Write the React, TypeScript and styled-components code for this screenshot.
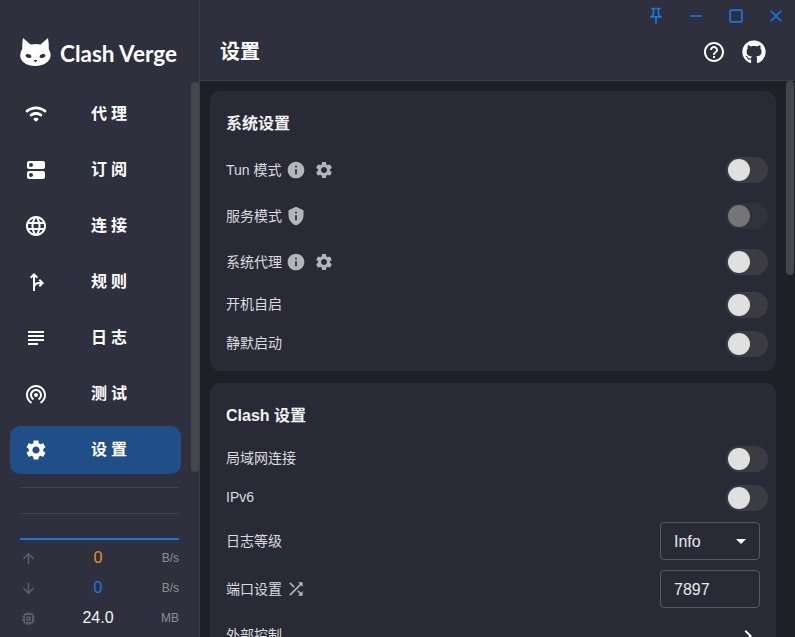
import React from 'react';
import styled, { createGlobalStyle } from 'styled-components';
import {
  MdLanguage, MdForkRight, MdSubject, MdWifiTethering, MdSettings,
  MdArrowUpward, MdArrowDownward, MdMemory, MdInfo, MdPrivacyTip, MdShuffle,
  MdHelpOutline, MdChevronRight, MdArrowDropDown, MdOutlinePushPin, MdClose, MdCropSquare, MdRemove,
} from 'react-icons/md';
import { FaGithub } from 'react-icons/fa';

const GlobalStyle = createGlobalStyle`
  html, body { margin: 0; padding: 0; height: 100%; overflow: hidden; background: #1e1f27; }
  #root { height: 100%; }
  * { box-sizing: border-box; }
  body { font-family: "Liberation Sans", "Noto Sans CJK SC", sans-serif; }
`;

const Layout = styled.div`
  display: flex;
  width: 100vw;
  height: 100vh;
  overflow: hidden;
`;

const Sidebar = styled.aside`
  position: relative;
  flex: 0 0 200px;
  display: flex;
  flex-direction: column;
  background: #2e303d;
  border-right: 1px solid #3c3e4a;
  overflow: hidden;
`;

const Logo = styled.div`
  display: flex;
  align-items: center;
  gap: 9px;
  height: 90px;
  padding: 14px 0 0 20px;
  color: #fff;
  font-family: "Lato", sans-serif;
  font-weight: 700;
  font-size: 22.5px;
`;

const LogoText = styled.span`
  margin-top: 2px;
`;

const NavList = styled.nav`
  display: flex;
  flex-direction: column;
  gap: 8px;
  padding: 0 18px 0 10px;
`;

const NavItem = styled.div<{ $active?: boolean }>`
  display: flex;
  align-items: center;
  height: 48px;
  padding: 0 7px 0 14px;
  border-radius: 10px;
  color: #fff;
  background: ${(p) => (p.$active ? '#1f4f86' : 'transparent')};
  svg { flex: 0 0 24px; font-size: 24px; }
`;

const NavLabel = styled.span`
  flex: 1;
  margin-bottom: 4px;
  text-align: center;
  font-size: 16px;
  font-weight: 700;
  letter-spacing: 4px;
`;

const Traffic = styled.div`
  display: flex;
  flex-direction: column;
  margin: 13px 20px 0;
`;

const GridLine = styled.div`
  height: 1px;
  margin-bottom: 25px;
  background: #41434e;
`;

const TrafficLine = styled.div`
  height: 2px;
  margin: -1px 0 3px;
  background: #1976e6;
`;

const TrafficRow = styled.div`
  display: grid;
  grid-template-columns: 16px 1fr 32px;
  align-items: center;
  height: 30px;
  svg { font-size: 17px; color: #5f616c; }
`;

const TrafficValue = styled.span<{ $color: string }>`
  padding-left: 13px;
  text-align: center;
  font-size: 16px;
  color: ${(p) => p.$color};
`;

const TrafficUnit = styled.span`
  text-align: right;
  font-size: 12px;
  color: #8e8f96;
`;

const Thumb = styled.div<{ $top: number; $height: number; $right: number }>`
  position: absolute;
  top: ${(p) => p.$top}px;
  right: ${(p) => p.$right}px;
  width: 8px;
  height: ${(p) => p.$height}px;
  border-radius: 4px;
  background: #45464c;
`;

const Main = styled.main`
  position: relative;
  flex: 1;
  min-width: 0;
  display: flex;
  flex-direction: column;
`;

const Header = styled.header`
  flex: 0 0 81px;
  display: flex;
  flex-direction: column;
  background: #2e303d;
  border-bottom: 1px solid #3c3e4a;
`;

const WindowBar = styled.div`
  display: flex;
  justify-content: flex-end;
  height: 32px;
  margin-right: -1px;
  color: #1976e6;
`;

const WindowButton = styled.div`
  display: flex;
  align-items: center;
  justify-content: center;
  width: 40px;
  height: 32px;
  svg { font-size: 20px; }
`;

const TitleBar = styled.div`
  display: flex;
  align-items: center;
  justify-content: space-between;
  height: 40px;
  padding: 0 29px 0 20px;
  color: #fff;
`;

const PageTitle = styled.h1`
  margin: 0 0 3px;
  font-size: 20px;
  font-weight: 700;
`;

const TitleIcons = styled.div`
  display: flex;
  align-items: center;
  gap: 16px;
`;

const Content = styled.div`
  flex: 1;
  display: flex;
  flex-direction: column;
  gap: 12px;
  padding: 10px 19px 0 10px;
  overflow: hidden;
  background: #1e1f27;
`;

const Card = styled.section`
  flex: 0 0 auto;
  padding: 0 8px 8px 16px;
  border-radius: 10px;
  background: #282a36;
`;

const CardTitle = styled.h2`
  display: flex;
  align-items: center;
  margin: 0;
  height: 56px;
  padding-top: 6px;
  font-size: 16px;
  font-weight: 700;
  color: #f2f2f3;
`;

const Row = styled.div<{ $height: number }>`
  display: flex;
  align-items: center;
  justify-content: space-between;
  height: ${(p) => p.$height}px;
`;

const RowLabel = styled.div`
  display: flex;
  align-items: center;
  font-size: 14px;
  color: #dcdcdf;
`;

const RowText = styled.span<{ $lift?: number }>`
  margin-bottom: ${(p) => p.$lift ?? 2}px;
`;

const HintIcon = styled.span<{ $gap?: number }>`
  display: inline-flex;
  margin-left: ${(p) => p.$gap ?? 4}px;
  color: #b4b4b9;
  svg { display: block; font-size: 20px; }
`;

const SwitchTrack = styled.div<{ $disabled?: boolean }>`
  position: relative;
  width: 42px;
  height: 26px;
  border-radius: 13px;
  background: ${(p) => (p.$disabled ? '#31323c' : '#3c3b41')};
`;

const SwitchKnob = styled.div<{ $disabled?: boolean }>`
  position: absolute;
  top: 2px;
  left: 2px;
  width: 22px;
  height: 22px;
  border-radius: 50%;
  background: ${(p) => (p.$disabled ? '#757575' : '#e0e0e0')};
`;

const Field = styled.div`
  display: flex;
  align-items: center;
  justify-content: space-between;
  width: 100px;
  height: 38px;
  margin-right: 8px;
  padding: 0 6px 0 13px;
  border: 1px solid #565964;
  border-radius: 4px;
  font-size: 16px;
  color: #e8e8ea;
  svg { font-size: 24px; color: #fff; }
`;

const FieldText = styled.span`
  margin-top: 2px;
`;

const Chevron = styled.span`
  display: inline-flex;
  margin-right: 8px;
  color: #fff;
  svg { font-size: 24px; }
`;

const WifiIcon = () => (
  <svg viewBox="0 0 24 24" width="24" height="24" fill="currentColor">
    <path d="M2.06 10.06c.51.51 1.32.56 1.87.1 4.67-3.84 11.45-3.84 16.13-.01.56.46 1.38.42 1.89-.09.59-.59.55-1.57-.1-2.1-5.71-4.67-13.97-4.67-19.69 0-.65.52-.7 1.5-.1 2.1m7.76 7.76 1.47 1.47c.39.39 1.02.39 1.41 0l1.47-1.47c.47-.47.37-1.28-.23-1.59-1.22-.63-2.68-.63-3.91 0-.57.31-.68 1.12-.21 1.59m-3.73-3.73c.49.49 1.26.54 1.83.13 2.44-1.73 5.72-1.73 8.16 0 .57.4 1.34.36 1.83-.13l.01-.01c.6-.6.56-1.62-.13-2.11-3.44-2.49-8.13-2.49-11.58 0-.69.5-.73 1.51-.12 2.12" />
  </svg>
);

const DnsIcon = () => (
  <svg viewBox="0 0 24 24" width="24" height="24" fill="currentColor">
    <path d="M19 13H5c-1.1 0-2 .9-2 2v4c0 1.1.9 2 2 2h14c1.1 0 2-.9 2-2v-4c0-1.1-.9-2-2-2M7 19c-1.1 0-2-.9-2-2s.9-2 2-2 2 .9 2 2-.9 2-2 2M19 3H5c-1.1 0-2 .9-2 2v4c0 1.1.9 2 2 2h14c1.1 0 2-.9 2-2V5c0-1.1-.9-2-2-2M7 9c-1.1 0-2-.9-2-2s.9-2 2-2 2 .9 2 2-.9 2-2 2" />
  </svg>
);

const navItems = [
  { label: '代理', icon: <WifiIcon /> },
  { label: '订阅', icon: <DnsIcon /> },
  { label: '连接', icon: <MdLanguage /> },
  { label: '规则', icon: <MdForkRight /> },
  { label: '日志', icon: <MdSubject /> },
  { label: '测试', icon: <MdWifiTethering /> },
  { label: '设置', icon: <MdSettings />, active: true },
];

const CatLogo = () => (
  <svg width="31" height="28" viewBox="0 0 31 28">
    <path
      fill="#fff"
      d="M3 0 L10.5 6.5 Q15.5 5.5 20.5 6.5 L28 0 Q29 6 28.8 11 Q31 15 30.6 18 C30 24 23 28 15.5 28 C7 28 .6 24 .2 18 Q0 14 2.2 11 Q2 5 3 0Z"
    />
    <ellipse cx="8.5" cy="18" rx="3" ry="1.8" fill="#2e303d" transform="rotate(20 8.5 18)" />
    <ellipse cx="22.5" cy="18" rx="3" ry="1.8" fill="#2e303d" transform="rotate(-20 22.5 18)" />
    <path fill="#2e303d" d="M13.5 22 H17.5 L15.5 24.5Z" />
  </svg>
);

const Switch: React.FC<{ disabled?: boolean }> = ({ disabled }) => (
  <SwitchTrack $disabled={disabled}>
    <SwitchKnob $disabled={disabled} />
  </SwitchTrack>
);

const App: React.FC = () => (
  <Layout>
    <GlobalStyle />
    <Sidebar>
      <Logo>
        <CatLogo />
        <LogoText>Clash Verge</LogoText>
      </Logo>
      <NavList>
        {navItems.map((item) => (
          <NavItem key={item.label} $active={item.active}>
            {item.icon}
            <NavLabel>{item.label}</NavLabel>
          </NavItem>
        ))}
      </NavList>
      <Traffic>
        <GridLine />
        <GridLine />
        <TrafficLine />
        <TrafficRow>
          <MdArrowUpward />
          <TrafficValue $color="#e8931f">0</TrafficValue>
          <TrafficUnit>B/s</TrafficUnit>
        </TrafficRow>
        <TrafficRow>
          <MdArrowDownward />
          <TrafficValue $color="#1976e6">0</TrafficValue>
          <TrafficUnit>B/s</TrafficUnit>
        </TrafficRow>
        <TrafficRow>
          <MdMemory />
          <TrafficValue $color="#f2f2f3">24.0</TrafficValue>
          <TrafficUnit>MB</TrafficUnit>
        </TrafficRow>
      </Traffic>
      <Thumb $top={82} $height={390} $right={0} />
    </Sidebar>
    <Main>
      <Header>
        <WindowBar>
          <WindowButton><MdOutlinePushPin /></WindowButton>
          <WindowButton><MdRemove /></WindowButton>
          <WindowButton><MdCropSquare /></WindowButton>
          <WindowButton><MdClose /></WindowButton>
        </WindowBar>
        <TitleBar>
          <PageTitle>设置</PageTitle>
          <TitleIcons>
            <MdHelpOutline size={24} />
            <FaGithub size={24} />
          </TitleIcons>
        </TitleBar>
      </Header>
      <Content>
        <Card>
          <CardTitle>系统设置</CardTitle>
          <Row $height={46}>
            <RowLabel>
              <RowText>Tun 模式</RowText>
              <HintIcon><MdInfo /></HintIcon>
              <HintIcon $gap={8}><MdSettings /></HintIcon>
            </RowLabel>
            <Switch />
          </Row>
          <Row $height={46}>
            <RowLabel>
              <RowText>服务模式</RowText>
              <HintIcon><MdPrivacyTip /></HintIcon>
            </RowLabel>
            <Switch disabled />
          </Row>
          <Row $height={46}>
            <RowLabel>
              <RowText>系统代理</RowText>
              <HintIcon><MdInfo /></HintIcon>
              <HintIcon $gap={8}><MdSettings /></HintIcon>
            </RowLabel>
            <Switch />
          </Row>
          <Row $height={39}>
            <RowLabel><RowText $lift={4}>开机自启</RowText></RowLabel>
            <Switch />
          </Row>
          <Row $height={39}>
            <RowLabel><RowText $lift={4}>静默启动</RowText></RowLabel>
            <Switch />
          </Row>
        </Card>
        <Card>
          <CardTitle>Clash 设置</CardTitle>
          <Row $height={39}>
            <RowLabel><RowText $lift={4}>局域网连接</RowText></RowLabel>
            <Switch />
          </Row>
          <Row $height={39}>
            <RowLabel><RowText>IPv6</RowText></RowLabel>
            <Switch />
          </Row>
          <Row $height={48}>
            <RowLabel><RowText $lift={3}>日志等级</RowText></RowLabel>
            <Field><FieldText>Info</FieldText><MdArrowDropDown /></Field>
          </Row>
          <Row $height={48}>
            <RowLabel>
              <RowText $lift={3}>端口设置</RowText>
              <HintIcon $gap={4}><MdShuffle /></HintIcon>
            </RowLabel>
            <Field><FieldText>7897</FieldText></Field>
          </Row>
          <Row $height={46}>
            <RowLabel><RowText $lift={4}>外部控制</RowText></RowLabel>
            <Chevron><MdChevronRight /></Chevron>
          </Row>
        </Card>
      </Content>
      <Thumb $top={81} $height={194} $right={1} />
    </Main>
  </Layout>
);

export default App;
